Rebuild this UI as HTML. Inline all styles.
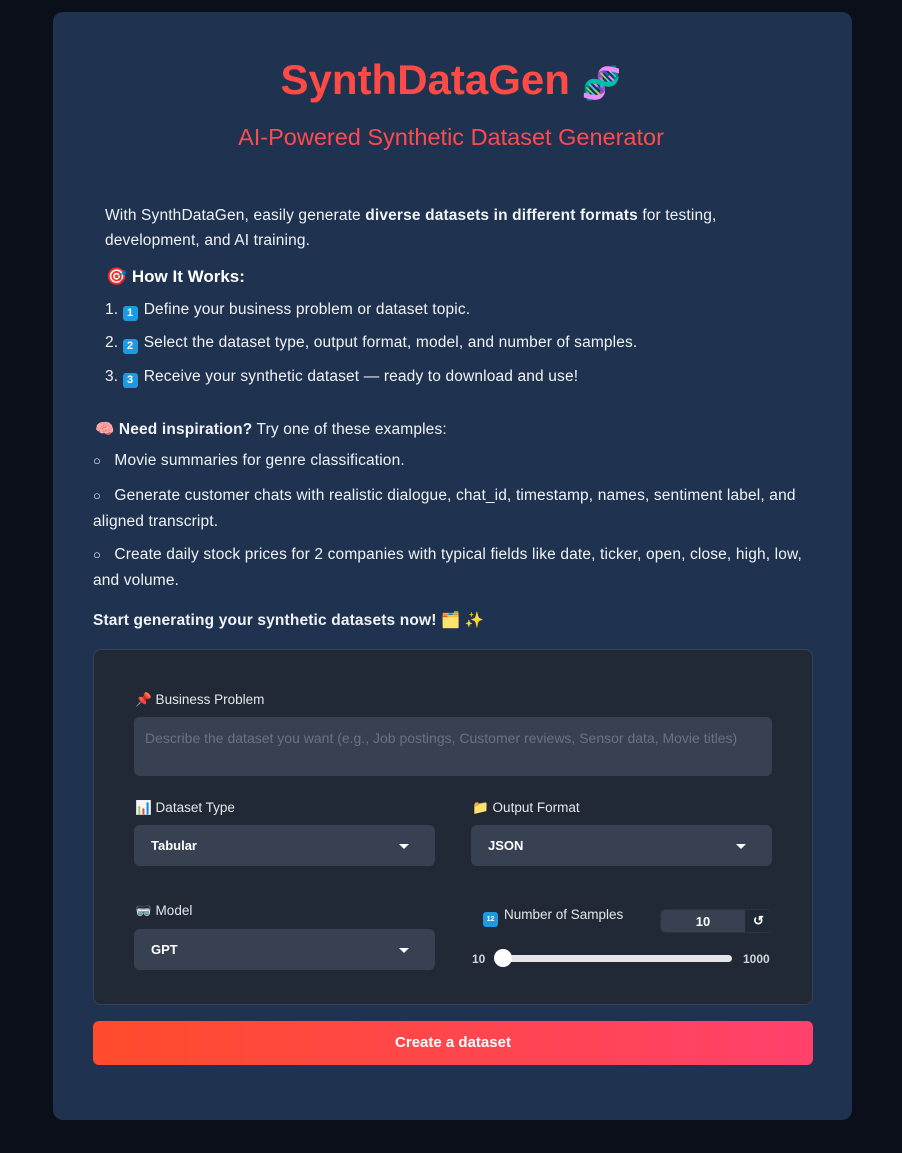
<!DOCTYPE html>
<html><head><meta charset="utf-8"><style>
*{box-sizing:border-box;margin:0;padding:0}
body{width:902px;height:1153px;background:#0b0f19;font-family:"Liberation Sans","Noto Sans CJK JP",sans-serif;color:#fff;position:relative;overflow:hidden}
.card{position:absolute;left:53px;top:12px;width:799px;height:1108px;background:#1f3350;border-radius:10px}
.a{position:absolute;white-space:nowrap}
.t{font-size:15.5px;color:#f1f3f6;letter-spacing:0.15px}
.e{display:inline-block;width:15px;height:15px;border-radius:3px;background:#1e9be0;color:#fff;font-size:11px;font-weight:bold;text-align:center;line-height:15px;vertical-align:-2px;margin-right:6px}
.panel{position:absolute;left:93px;top:649px;width:720px;height:356px;background:#212937;border:1px solid #374151;border-radius:8px}
.lab{font-size:13.5px;color:#e5e7eb}
.box{position:absolute;background:#374151;border-radius:6px}
.sel{font-size:13px;font-weight:bold;color:#fff;padding-left:17px;line-height:41px}
.arr{position:absolute;right:26px;top:19px;border-left:5px solid transparent;border-right:5px solid transparent;border-top:5px solid #fff}
.btn{position:absolute;left:93px;top:1021px;width:720px;height:44px;border-radius:6px;background:linear-gradient(90deg,#ff4b2b,#ff416c);text-align:center;line-height:44px;font-weight:bold;font-size:15px}
.b{font-weight:bold;font-size:13px}
</style></head><body>
<div class="card"></div>
<div class="a" style="left:0;width:902px;text-align:center;top:56px;font-size:42px;font-weight:bold;color:#ff4a45">SynthDataGen <span style="font-size:32px">🧬</span></div>
<div class="a" style="left:0;width:902px;text-align:center;top:124px;font-size:23.5px;color:#ff4a4f">AI-Powered Synthetic Dataset Generator</div>
<div class="a t" style="left:105px;top:203px;line-height:25px">With SynthDataGen, easily generate <b>diverse datasets in different formats</b> for testing,<br>development, and AI training.</div>
<div class="a" style="left:106px;top:267px;font-size:17px;font-weight:bold">🎯 How It Works:</div>
<div class="a t" style="left:105px;top:301px">1. <span class="e">1</span>Define your business problem or dataset topic.</div>
<div class="a t" style="left:105px;top:334px">2. <span class="e">2</span>Select the dataset type, output format, model, and number of samples.</div>
<div class="a t" style="left:105px;top:368px">3. <span class="e">3</span>Receive your synthetic dataset — ready to download and use!</div>
<div class="a t" style="left:95px;top:420px">🧠 <b>Need inspiration?</b> Try one of these examples:</div>
<div class="a t" style="left:93px;top:452px"><span class="b">○</span>&nbsp;&nbsp; Movie summaries for genre classification.</div>
<div class="a t" style="left:93px;top:483px;line-height:26px"><span class="b">○</span>&nbsp;&nbsp; Generate customer chats with realistic dialogue, chat_id, timestamp, names, sentiment label, and<br>aligned transcript.</div>
<div class="a t" style="left:93px;top:542px;line-height:26px"><span class="b">○</span>&nbsp;&nbsp; Create daily stock prices for 2 companies with typical fields like date, ticker, open, close, high, low,<br>and volume.</div>
<div class="a t" style="left:93px;top:611px;font-weight:bold">Start generating your synthetic datasets now! 🗂️ ✨</div>
<div class="panel"></div>
<div class="a lab" style="left:135px;top:692px">📌 Business Problem</div>
<div class="box" style="left:134px;top:717px;width:638px;height:59px"><div class="a" style="left:11px;top:13px;font-size:14px;color:#6b7280">Describe the dataset you want (e.g., Job postings, Customer reviews, Sensor data, Movie titles)</div></div>
<div class="a lab" style="left:135px;top:800px">📊 Dataset Type</div>
<div class="box sel" style="left:134px;top:825px;width:301px;height:41px">Tabular<div class="arr"></div></div>
<div class="a lab" style="left:472px;top:800px">📁 Output Format</div>
<div class="box sel" style="left:471px;top:825px;width:301px;height:41px">JSON<div class="arr"></div></div>
<div class="a lab" style="left:135px;top:903px">🥽 Model</div>
<div class="box sel" style="left:134px;top:929px;width:301px;height:41px">GPT<div class="arr"></div></div>
<div class="a lab" style="left:483px;top:907px"><span class="e" style="font-size:7px">12</span>Number of Samples</div>
<div class="box" style="left:660px;top:909px;width:112px;height:24px;border:1px solid #2b3341"><div class="a" style="left:0;width:84px;text-align:center;top:4px;font-size:13px;font-weight:bold">10</div><div class="a" style="left:84px;top:0;width:27px;height:22px;background:#1f2937;border-radius:0 6px 6px 0;text-align:center;font-size:13px;line-height:22px;font-weight:bold">↺</div></div>
<div class="a" style="left:472px;top:952px;font-size:12px;font-weight:bold;color:#d1d5db">10</div>
<div class="a" style="left:496px;top:955px;width:236px;height:7px;background:#e5e5ea;border-radius:4px"></div>
<div class="a" style="left:494px;top:949px;width:18px;height:18px;background:#fff;border-radius:50%"></div>
<div class="a" style="left:743px;top:952px;font-size:12px;font-weight:bold;color:#d1d5db">1000</div>
<div class="btn">Create a dataset</div>
</body></html>
